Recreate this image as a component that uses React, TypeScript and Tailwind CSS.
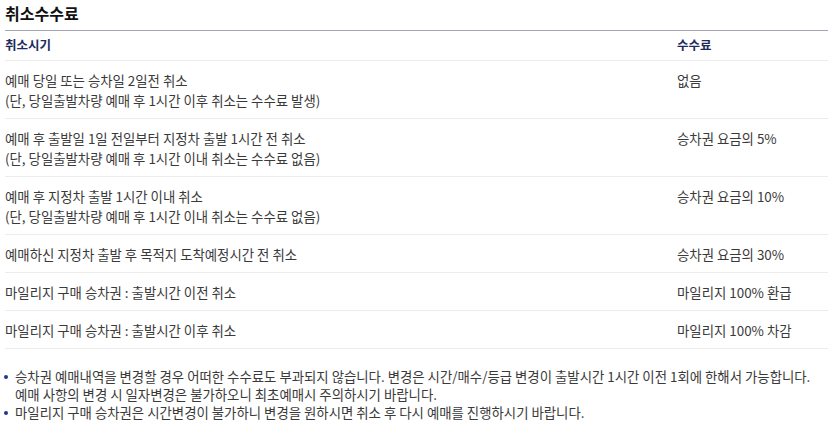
const rows: { when: string[]; fee: string }[] = [
  {
    when: ["예매 당일 또는 승차일 2일전 취소", "(단, 당일출발차량 예매 후 1시간 이후 취소는 수수료 발생)"],
    fee: "없음",
  },
  {
    when: ["예매 후 출발일 1일 전일부터 지정차 출발 1시간 전 취소", "(단, 당일출발차량 예매 후 1시간 이내 취소는 수수료 없음)"],
    fee: "승차권 요금의 5%",
  },
  {
    when: ["예매 후 지정차 출발 1시간 이내 취소", "(단, 당일출발차량 예매 후 1시간 이내 취소는 수수료 없음)"],
    fee: "승차권 요금의 10%",
  },
  { when: ["예매하신 지정차 출발 후 목적지 도착예정시간 전 취소"], fee: "승차권 요금의 30%" },
  { when: ["마일리지 구매 승차권 : 출발시간 이전 취소"], fee: "마일리지 100% 환급" },
  { when: ["마일리지 구매 승차권 : 출발시간 이후 취소"], fee: "마일리지 100% 차감" },
];

const notes = [
  [
    "승차권 예매내역을 변경할 경우 어떠한 수수료도 부과되지 않습니다. 변경은 시간/매수/등급 변경이 출발시간 1시간 이전 1회에 한해서 가능합니다.",
    "예매 사항의 변경 시 일자변경은 불가하오니 최초예매시 주의하시기 바랍니다.",
  ],
  ["마일리지 구매 승차권은 시간변경이 불가하니 변경을 원하시면 취소 후 다시 예매를 진행하시기 바랍니다."],
];

export default function App() {
  return (
    <div
      className="w-[828px] h-[426px] overflow-hidden bg-white pl-[5px] text-[#3a3a3a]"
      style={{ fontFamily: '"Noto Sans CJK KR", "Noto Sans", sans-serif' }}
    >
      <h2 className="h-[30px] pt-[2px] text-[16px] font-bold leading-[22px] text-[#111]">취소수수료</h2>
      <div className="border-t border-[#a3a6b4]">
        <div className="grid h-[30px] grid-cols-[672px_1fr] items-center border-b border-[#ececec] text-[12.5px] font-bold text-[#1d2b5c]">
          <div>취소시기</div>
          <div>수수료</div>
        </div>
        {rows.map((r, i) => (
          <div
            key={i}
            className="grid grid-cols-[672px_1fr] border-b border-[#ececec] pt-[9px] pb-[8px] text-[13.4px] leading-5"
          >
            <div>
              {r.when.map((l, j) => (
                <div key={j}>{l}</div>
              ))}
            </div>
            <div>{r.fee}</div>
          </div>
        ))}
      </div>
      <ul className="mt-[18px] flex flex-col text-[13.4px] leading-[18px]">
        {notes.map((n, i) => (
          <li key={i} className="relative pl-[10px]">
            <span className="absolute left-[-1px] top-[8px] h-[4px] w-[4px] rounded-full bg-[#1d3a8a]" />
            {n.map((l, j) => (
              <div key={j}>{l}</div>
            ))}
          </li>
        ))}
      </ul>
    </div>
  );
}
